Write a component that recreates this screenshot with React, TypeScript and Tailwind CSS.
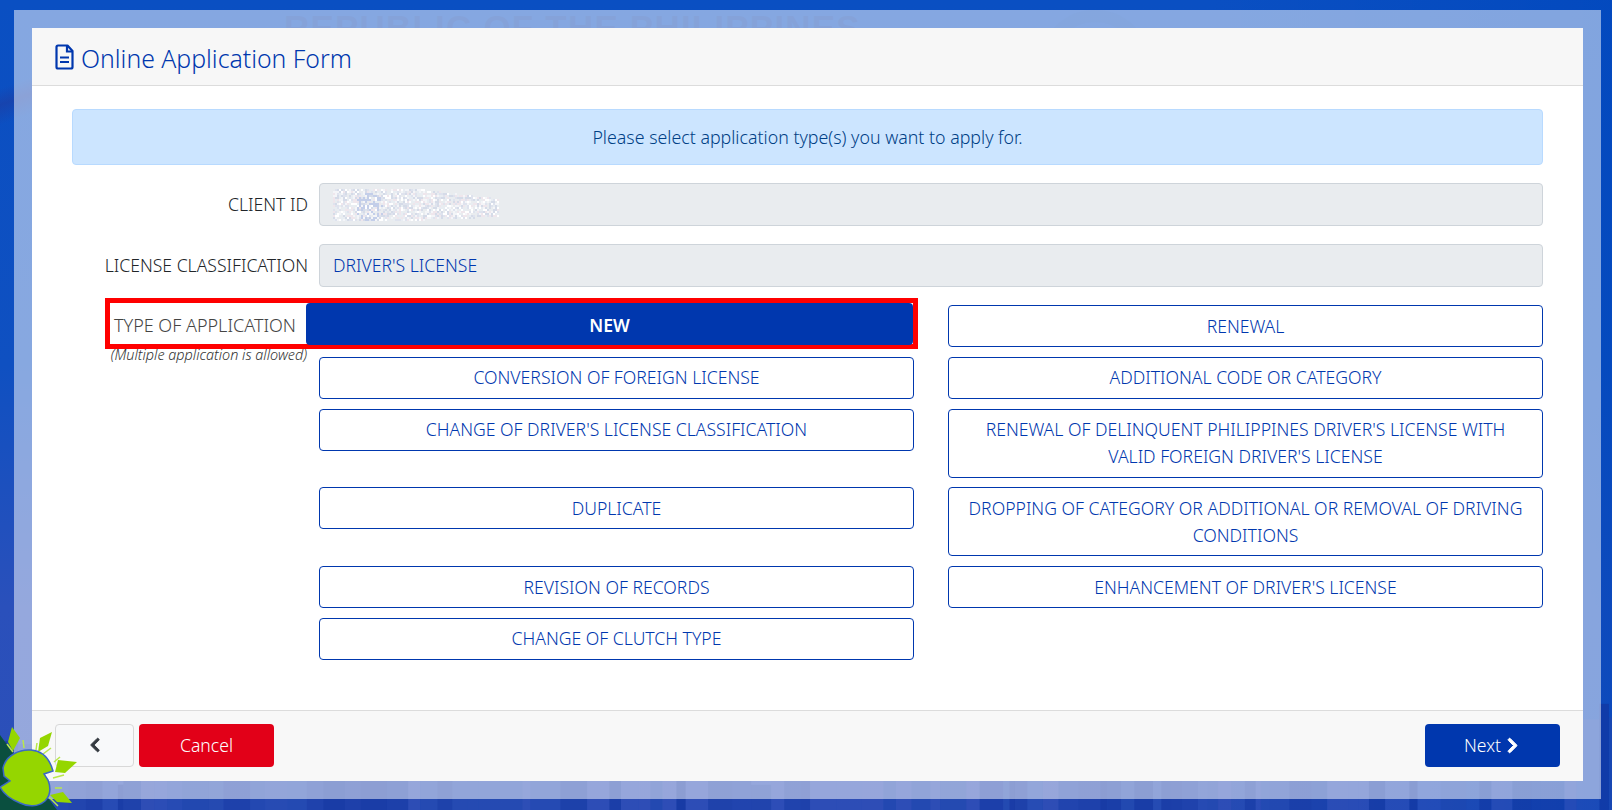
import { FaChevronLeft, FaChevronRight } from "react-icons/fa";

const FONT = "font-['Noto_Sans','Open_Sans',sans-serif]";

const leftTypes = [
  "CONVERSION OF FOREIGN LICENSE",
  "CHANGE OF DRIVER'S LICENSE CLASSIFICATION",
  "DUPLICATE",
  "REVISION OF RECORDS",
  "CHANGE OF CLUTCH TYPE",
];

const rightTypes = [
  "RENEWAL",
  "ADDITIONAL CODE OR CATEGORY",
  "RENEWAL OF DELINQUENT PHILIPPINES DRIVER'S LICENSE WITH VALID FOREIGN DRIVER'S LICENSE",
  "DROPPING OF CATEGORY OR ADDITIONAL OR REMOVAL OF DRIVING CONDITIONS",
  "ENHANCEMENT OF DRIVER'S LICENSE",
];

// small seeded generator so the backdrop and the blurred id stay the same every run
function makeRandom(seed: number) {
  let s = seed;
  return () => {
    s = (s * 16807) % 2147483647;
    return s / 2147483647;
  };
}

function buildBuildings() {
  const rnd = makeRandom(42);
  const out: { x: number; y: number; w: number; h: number; c: string; o: number }[] = [];
  let x = 0;
  while (x < 1612) {
    const w = 5 + rnd() * 22;
    const right = x > 1560;
    const top = right ? 694 + rnd() * 30 : 730 + rnd() * 55;
    const pick = rnd();
    const c = pick > 0.6 ? "#12359f" : pick > 0.3 ? "#2f4cb4" : "#1f46ad";
    out.push({ x, y: top, w, h: 810 - top, c, o: 0.35 + rnd() * 0.4 });
    x += w;
  }
  return out;
}

function buildNoise() {
  const rnd = makeRandom(7);
  const cells: { x: number; y: number; c: string }[] = [];
  const colors = ["#ffffff", "#f4f5f8", "#dfe3ee", "#d5dbe8", "#efe6ec", "#e8edf2"];
  for (let x = 0; x < 166; x += 2) {
    // the blob is taller on the left and thins out to the right
    const half = x < 90 ? 15 : 15 - ((x - 90) / 76) * 6;
    const cy = x < 90 ? 15 : 15 + ((x - 90) / 76) * 3;
    for (let y = 0; y < 32; y += 2) {
      if (Math.abs(y - cy) > half || rnd() < 0.12) continue;
      const nearCenter = Math.hypot(x - 36, y - 17) < 14;
      const c = nearCenter && rnd() > 0.55 ? "#c3cee9" : colors[Math.floor(rnd() * colors.length)];
      cells.push({ x, y, c });
    }
  }
  return cells;
}

const buildings = buildBuildings();
const noise = buildNoise();

function Backdrop() {
  return (
    <div className="absolute inset-0 overflow-hidden bg-[linear-gradient(180deg,#0a4fc2_0%,#0f50c1_45%,#2a50bb_75%,#2c4fb8_100%)]">
      <div className="absolute inset-y-0 right-0 w-[400px] bg-[linear-gradient(90deg,transparent,#0047bd)] opacity-70" />
      <div className="absolute left-0 top-[60px] h-[70px] w-[32px] bg-[linear-gradient(160deg,transparent_35%,#1c3fa6_55%,transparent_80%)] opacity-70" />
      <svg className="absolute inset-0" width="1612" height="810" viewBox="0 0 1612 810">
        {buildings.map((b, i) => (
          <rect key={i} x={b.x} y={b.y} width={b.w} height={b.h} fill={b.c} opacity={b.o} />
        ))}
        <circle cx="1095" cy="66" r="50" fill="none" stroke="#0a3a9e" strokeWidth="12" opacity="0.12" />
        <circle cx="1095" cy="66" r="34" fill="none" stroke="#0a3a9e" strokeWidth="3" opacity="0.25" />
      </svg>
      <div className="absolute left-[284px] top-[6px] whitespace-nowrap font-['Liberation_Sans',sans-serif] text-[35px] font-bold leading-[44px] tracking-[1.2px] text-[#0a3090] opacity-30">
        REPUBLIC OF THE PHILIPPINES
      </div>
    </div>
  );
}

function Logo() {
  return (
    <svg
      className="absolute bottom-0 left-0 z-20"
      width="90"
      height="100"
      viewBox="0 0 90 100"
    >
      <polygon points="0,25 22,55 48,88 57,100 0,100" fill="#0a4f3f" />
      <g fill="#95d600">
        <polygon points="12,17 20,28 13,41 8,32" />
        <polygon points="52,22 48,36 38,42 40,28" />
        <polygon points="77,52 65,63 55,62 58,50" />
        <polygon points="72,93 57,92 50,85 63,82" />
      </g>
      <g stroke="#b9e84a" strokeWidth="1.5" fill="none">
        <path d="M7 34 L13 42" />
        <path d="M23 30 L24 38" />
        <path d="M37 33 L36 40" />
        <path d="M43 44 L51 38" />
        <path d="M53 68 L64 65" />
        <path d="M54 52 L60 47" />
        <path d="M49 87 L58 96" />
        <path d="M55 78 L62 78" />
      </g>
      <path
        d="M3 58 C6 45 20 39 31 40 C43 41 50 50 53 61 L44 64 L48 70 C51 78 50 86 45 91 C38 97 28 97 20 93 C10 89 3 83 0 77 L10 71 L4 66 Z"
        fill="#95d600"
        stroke="#3b68c4"
        strokeWidth="1.5"
      />
    </svg>
  );
}

function FileIcon() {
  return (
    <svg width="19" height="26" viewBox="0 0 19 26" fill="none" stroke="#0037ae" strokeWidth="2.2">
      <path d="M3 1.5 H12.5 L17.5 7 V23 Q17.5 24.5 16 24.5 H3 Q1.5 24.5 1.5 23 V3 Q1.5 1.5 3 1.5 Z" strokeLinejoin="round" />
      <path d="M12 1.5 V7.5 H17.5" />
      <path d="M5 13.5 H14 M5 18 H14" />
    </svg>
  );
}

function TypeButton({ label }: { label: string }) {
  return (
    <button className="w-full cursor-pointer rounded-[4px] border border-[#0037ae] bg-white px-3 py-[6.5px] text-center text-[17.6px] font-light leading-[27px] text-[#0037ae]">
      {label}
    </button>
  );
}

function FieldRow({ label, children }: { label: string; children: React.ReactNode }) {
  return (
    <div className="mb-[18px] flex items-center gap-[11px]">
      <div className="w-[236px] shrink-0 whitespace-nowrap text-right text-[17.6px] font-light leading-[27px] text-[#212529]">{label}</div>
      <div className="flex h-[43px] flex-1 items-center overflow-hidden rounded-[4px] border border-[#ced4da] bg-[#e9ecef] px-[13px] text-[17.6px] font-light leading-[27px] text-[#0037ae]">
        {children}
      </div>
    </div>
  );
}

export default function App() {
  return (
    <div className={`relative h-[810px] overflow-hidden pb-[11px] pl-[14px] pr-[11px] pt-[10px] ${FONT}`}>
      <Backdrop />

      <div className="relative h-full bg-white/50 p-[18px]">
        <div className="flex h-full flex-col bg-white">
          <div className="flex h-[58px] items-center gap-[7px] border-b border-[#dcdcdc] bg-[#f7f7f7] pl-[23px]">
            <FileIcon />
            <span className="mt-0.5 text-[24.8px] font-light leading-[32px] text-[#0037ae]">Online Application Form</span>
          </div>

          <div className="flex-1 px-10 pt-[23px]">
            <div className="mb-[18px] flex h-[56px] items-center justify-center rounded-[4px] border border-[#b8daff] bg-[#cce5ff] text-[17.8px] font-light text-[#004085]">
              Please select application type(s) you want to apply for.
            </div>

            <FieldRow label="CLIENT ID">
              <svg className="shrink-0" width="166" height="32" viewBox="0 0 166 32">
                {noise.map((n, i) => (
                  <rect key={i} x={n.x} y={n.y} width="2" height="2" fill={n.c} />
                ))}
              </svg>
            </FieldRow>
            <FieldRow label="LICENSE CLASSIFICATION">DRIVER'S LICENSE</FieldRow>

            <div className="relative flex gap-[11px]">
              <div className="pointer-events-none absolute left-[33px] top-[-7px] h-[51px] w-[813px] border-[5px] border-[#ff0000]" />
              <div className="w-[236px] shrink-0 text-right">
                <div className="h-[42px] whitespace-nowrap pr-3 text-[18px] font-light leading-[40px] text-[#444]">TYPE OF APPLICATION</div>
                <div className="whitespace-nowrap pr-px text-[14.4px] font-light italic leading-[16px] text-[#333]">
                  (Multiple application is allowed)
                </div>
              </div>
              <div className="grid flex-1 grid-cols-2 items-start gap-x-[34px] gap-y-[9.8px]">
                <div className="h-[42px]">
                  <button className="relative -ml-[13px] h-[42px] w-[607px] -translate-y-0.5 cursor-pointer rounded-[4px] bg-[#0037ae] pt-[2px] text-[17.6px] font-semibold text-white">
                    NEW
                  </button>
                </div>
                {rightTypes.map((t, i) => (
                  <div key={t} className={i === 0 ? "" : "contents"}>
                    {i === 0 ? (
                      <TypeButton label={t} />
                    ) : (
                      <>
                        <TypeButton label={leftTypes[i - 1]} />
                        <TypeButton label={t} />
                      </>
                    )}
                  </div>
                ))}
                <TypeButton label={leftTypes[4]} />
              </div>
            </div>
          </div>

          <div className="flex h-[71px] items-center justify-between border-t border-[#dcdcdc] bg-[#f8f8f8] pb-[2px] pl-[23px] pr-[23px]">
            <div className="flex gap-[5px]">
              <button className="flex h-[43px] w-[79px] cursor-pointer items-center justify-center rounded-[4px] border border-[#d8d8d8] bg-[#f8f9fa] text-[#343a40]">
                <FaChevronLeft size={16} stroke="currentColor" strokeWidth={30} />
              </button>
              <button className="h-[43px] w-[135px] cursor-pointer rounded-[4px] bg-[#e20018] text-[17.6px] font-light text-white">
                Cancel
              </button>
            </div>
            <button className="flex h-[43px] w-[135px] cursor-pointer items-center justify-center gap-[3px] rounded-[4px] bg-[#0037ae] text-[17.6px] font-light text-white">
              Next
              <FaChevronRight size={17} stroke="currentColor" strokeWidth={30} />
            </button>
          </div>
        </div>
      </div>

      <Logo />
    </div>
  );
}
